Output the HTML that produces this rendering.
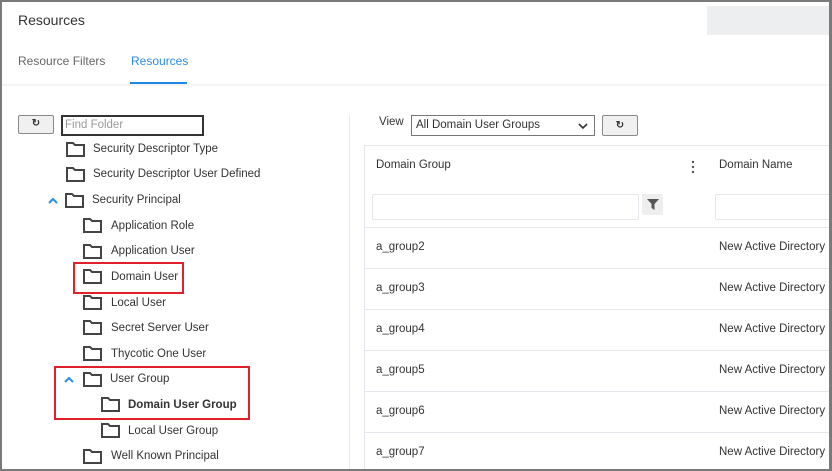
<!DOCTYPE html><html><head><style>
*{margin:0;padding:0;box-sizing:border-box}
body{width:832px;height:471px;overflow:hidden;background:#fff;font-family:"Liberation Sans",sans-serif;font-size:11.5px;color:#333;position:relative}
.a{position:absolute;white-space:nowrap}
.red{position:absolute;border:2px solid #e0202a}
.rl{position:absolute;left:365px;width:467px;height:1px;background:#e3e6ea}
</style></head><body>
<div class="a" style="left:18px;top:12px;font-size:14px;color:#333">Resources</div>
<div class="a" style="left:707px;top:6px;width:123px;height:29px;background:#eceeef"></div>
<div class="a" style="left:18px;top:54px;color:#666;font-size:12px">Resource Filters</div>
<div class="a" style="left:131px;top:54px;color:#2a8ce6;font-size:12px">Resources</div>
<div class="a" style="left:130px;top:82px;width:57px;height:2px;background:#1e88e5"></div>
<div class="a" style="left:2px;top:84px;width:828px;height:2px;background:#f4f4f4"></div>
<div class="a" style="left:18px;top:115px;width:36px;height:19px;border:1px solid #8a8a8a;border-radius:2px;background:#f0f0f0;text-align:center;font-size:10px;line-height:16px;font-weight:bold">&#x21bb;</div>
<div class="a" style="left:61px;top:115px;width:143px;height:21px;border:2px solid #333;color:#999;padding-left:2px;line-height:17px">Find Folder</div>
<div class="a" style="left:349px;top:115px;width:1px;height:356px;background:#e8e8e8"></div>
<svg class="a" style="left:0;top:0" width="350" height="471">
<g fill="none" stroke="#444" stroke-width="2">
<path d="M67 143h6l2 2h9v11h-17z"/><path d="M67 168h6l2 2h9v11h-17z"/><path d="M66 194h6l2 2h9v11h-17z"/>
<path d="M84 219h6l2 2h9v11h-17z"/><path d="M84 245h6l2 2h9v11h-17z"/><path d="M84 270h6l2 2h9v11h-17z"/>
<path d="M84 296h6l2 2h9v11h-17z"/><path d="M84 321h6l2 2h9v11h-17z"/><path d="M84 347h6l2 2h9v11h-17z"/>
<path d="M84 373h6l2 2h9v11h-17z"/><path d="M102 398h6l2 2h9v11h-17z"/><path d="M102 424h6l2 2h9v11h-17z"/>
<path d="M84 450h6l2 2h9v11h-17z"/>
</g>
<g fill="none" stroke="#2a8ce6" stroke-width="2"><path d="M49 203l4-4 4 4"/><path d="M65 382l4-4 4 4"/></g>
</svg>
<div class="a" style="left:93px;top:143px">Security Descriptor Type</div>
<div class="a" style="left:93px;top:168px">Security Descriptor User Defined</div>
<div class="a" style="left:92px;top:194px">Security Principal</div>
<div class="a" style="left:111px;top:220px">Application Role</div>
<div class="a" style="left:111px;top:245px">Application User</div>
<div class="a" style="left:111px;top:271px">Domain User</div>
<div class="a" style="left:111px;top:297px">Local User</div>
<div class="a" style="left:111px;top:322px">Secret Server User</div>
<div class="a" style="left:111px;top:348px">Thycotic One User</div>
<div class="a" style="left:110px;top:373px">User Group</div>
<div class="a" style="left:128px;top:399px;font-weight:bold">Domain User Group</div>
<div class="a" style="left:128px;top:425px">Local User Group</div>
<div class="a" style="left:111px;top:450px">Well Known Principal</div>
<div class="red" style="left:73px;top:262px;width:111px;height:32px"></div>
<div class="red" style="left:54px;top:366px;width:196px;height:54px"></div>
<div class="a" style="left:379px;top:116px">View</div>
<div class="a" style="left:411px;top:115px;width:184px;height:21px;border:1px solid #777;padding-left:4px;line-height:19px">All Domain User Groups</div>
<svg class="a" style="left:578px;top:122px" width="10" height="8"><path d="M1 2l4 4 4-4" fill="none" stroke="#333" stroke-width="1.6"/></svg>
<div class="a" style="left:602px;top:115px;width:36px;height:21px;border:1px solid #8a8a8a;border-radius:2px;background:#f0f0f0;text-align:center;font-size:10px;line-height:19px;font-weight:bold">&#x21bb;</div>
<div class="a" style="left:364px;top:145px;width:1px;height:326px;background:#e3e6ea"></div>
<div class="rl" style="top:145px"></div>
<div class="a" style="left:376px;top:159px">Domain Group</div>
<div class="a" style="left:719px;top:159px">Domain Name</div>
<svg class="a" style="left:691px;top:160px" width="4" height="14"><circle cx="2" cy="2" r="1.2" fill="#555"/><circle cx="2" cy="7" r="1.2" fill="#555"/><circle cx="2" cy="12" r="1.2" fill="#555"/></svg>
<div class="a" style="left:372px;top:194px;width:267px;height:26px;border:1px solid #e3e6ea;border-radius:2px"></div>
<div class="a" style="left:642px;top:194px;width:21px;height:21px;background:#eeeeee;border-radius:2px"></div>
<svg class="a" style="left:647px;top:199px" width="12" height="11"><path d="M0 0h12l-4.5 5v6l-3-2v-4z" fill="#555"/></svg>
<div class="a" style="left:715px;top:194px;width:117px;height:26px;border:1px solid #e3e6ea;border-radius:2px"></div>
<div class="rl" style="top:227px"></div>
<div class="a" style="left:376px;top:241px">a_group2</div><div class="a" style="left:719px;top:241px">New Active Directory</div>
<div class="rl" style="top:268px"></div>
<div class="a" style="left:376px;top:282px">a_group3</div><div class="a" style="left:719px;top:282px">New Active Directory</div>
<div class="rl" style="top:309px"></div>
<div class="a" style="left:376px;top:323px">a_group4</div><div class="a" style="left:719px;top:323px">New Active Directory</div>
<div class="rl" style="top:350px"></div>
<div class="a" style="left:376px;top:364px">a_group5</div><div class="a" style="left:719px;top:364px">New Active Directory</div>
<div class="rl" style="top:391px"></div>
<div class="a" style="left:376px;top:405px">a_group6</div><div class="a" style="left:719px;top:405px">New Active Directory</div>
<div class="rl" style="top:432px"></div>
<div class="a" style="left:376px;top:446px">a_group7</div><div class="a" style="left:719px;top:446px">New Active Directory</div>
<div class="a" style="left:829px;top:0;width:3px;height:471px;background:#7a7a7a"></div>
<div class="a" style="left:0;top:469px;width:832px;height:2px;background:#7a7a7a"></div>
<div class="a" style="left:0;top:0;width:2px;height:471px;background:#7a7a7a"></div>
<div class="a" style="left:0;top:0;width:832px;height:2px;background:#7a7a7a"></div>
</body></html>
